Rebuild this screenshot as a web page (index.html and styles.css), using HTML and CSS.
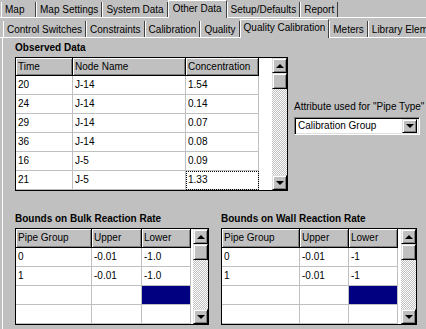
FILE: index.html
```html
<!DOCTYPE html>
<html lang="en">
<head>
  <meta charset="UTF-8" />
  <title>Quality Calibration</title>
  <link rel="stylesheet" href="styles.css">
</head>
<body>
  <div class="tabs tabs-main">
    <div class="tab tab-map">Map</div>
    <div class="tab">Map Settings</div>
    <div class="tab">System Data</div>
    <div class="tab active">Other Data</div>
    <div class="tab">Setup/Defaults</div>
    <div class="tab">Report</div>
  </div>

  <div class="tabs tabs-sub">
    <div class="tab">Control Switches</div>
    <div class="tab">Constraints</div>
    <div class="tab">Calibration</div>
    <div class="tab">Quality</div>
    <div class="tab active">Quality Calibration</div>
    <div class="tab">Meters</div>
    <div class="tab">Library Elements</div>
  </div>

  <div class="page">
    <div class="observed">
      <div class="panel">
        <div class="panel-title">Observed Data</div>
        <div class="grid grid-observed">
          <div class="grid-body">
            <div class="grid-table">
              <div class="hcell">Time</div>
              <div class="hcell">Node Name</div>
              <div class="hcell">Concentration</div>

              <div class="cell">20</div><div class="cell">J-14</div><div class="cell">1.54</div>
              <div class="cell">24</div><div class="cell">J-14</div><div class="cell">0.14</div>
              <div class="cell">29</div><div class="cell">J-14</div><div class="cell">0.07</div>
              <div class="cell">36</div><div class="cell">J-14</div><div class="cell">0.08</div>
              <div class="cell">16</div><div class="cell">J-5</div><div class="cell">0.09</div>
              <div class="cell">21</div><div class="cell">J-5</div><div class="cell cell-focus">1.33</div>
            </div>
          </div>
          <div class="scrollbar">
            <div class="sb-btn"><i class="arrow-up"></i></div>
            <div class="sb-thumb"></div>
            <div class="sb-track"></div>
            <div class="sb-btn"><i class="arrow-down"></i></div>
          </div>
        </div>
      </div>

      <div class="attribute">
        <div class="attribute-label">Attribute used for "Pipe Type"</div>
        <div class="combo">
          <span class="combo-text">Calibration Group</span>
          <span class="combo-btn"><i class="arrow-down"></i></span>
        </div>
      </div>
    </div>

    <div class="bounds">
      <div class="panel">
        <div class="panel-title">Bounds on Bulk Reaction Rate</div>
        <div class="grid grid-bounds grid-bulk">
          <div class="grid-body">
            <div class="grid-table">
              <div class="hcell">Pipe Group</div>
              <div class="hcell">Upper</div>
              <div class="hcell">Lower</div>

              <div class="cell">0</div><div class="cell">-0.01</div><div class="cell">-1.0</div>
              <div class="cell">1</div><div class="cell">-0.01</div><div class="cell">-1.0</div>
              <div class="cell"></div><div class="cell"></div><div class="cell cell-selected"></div>
              <div class="cell"></div><div class="cell"></div><div class="cell"></div>
            </div>
          </div>
          <div class="scrollbar">
            <div class="sb-btn"><i class="arrow-up"></i></div>
            <div class="sb-thumb"></div>
            <div class="sb-track"></div>
            <div class="sb-btn"><i class="arrow-down"></i></div>
          </div>
        </div>
      </div>

      <div class="panel">
        <div class="panel-title">Bounds on Wall Reaction Rate</div>
        <div class="grid grid-bounds grid-wall">
          <div class="grid-body">
            <div class="grid-table">
              <div class="hcell">Pipe Group</div>
              <div class="hcell">Upper</div>
              <div class="hcell">Lower</div>

              <div class="cell">0</div><div class="cell">-0.01</div><div class="cell">-1</div>
              <div class="cell">1</div><div class="cell">-0.01</div><div class="cell">-1</div>
              <div class="cell"></div><div class="cell"></div><div class="cell cell-selected"></div>
              <div class="cell"></div><div class="cell"></div><div class="cell"></div>
            </div>
          </div>
          <div class="scrollbar">
            <div class="sb-btn"><i class="arrow-up"></i></div>
            <div class="sb-thumb"></div>
            <div class="sb-track"></div>
            <div class="sb-btn"><i class="arrow-down"></i></div>
          </div>
        </div>
      </div>
    </div>
  </div>
</body>
</html>
```

FILE: styles.css
```css
* {
  box-sizing: border-box;
}

body {
  margin: 0;
  width: 426px;
  height: 329px;
  overflow: hidden;
  background: #c0c0c0;
  color: #000;
  font-family: "Liberation Sans", Arial, sans-serif;
  font-size: 10px;
}

/* tab strips */
.tabs {
  display: flex;
  align-items: flex-start;
  white-space: nowrap;
  border-bottom: 1px solid #fff;
}

.tab {
  flex-shrink: 0;
  padding: 0 3px;
  border-left: 1px solid #fff;
  border-right: 1px solid #404040;
}

.tabs-main {
  height: 18px;
  padding-left: 1px;
}

.tabs-main .tab {
  margin-top: 2px;
  height: 15px;
  padding-top: 1px;
  line-height: 14px;
}

.tabs-main .tab-map {
  min-width: 35px;
}

.tabs-main .tab.active {
  margin-top: 0;
  height: 18px;
  padding: 1px 4px 0;
  border-top: 1px solid #fff;
  line-height: 14px;
  background: #c0c0c0;
}

.tabs-sub {
  height: 20px;
  padding-left: 3px;
}

.tabs-sub .tab {
  margin-top: 3px;
  height: 16px;
  padding-top: 2px;
  line-height: 14px;
}

.tabs-sub .tab.active {
  margin-top: 1px;
  height: 19px;
  padding-top: 1px;
  border-top: 1px solid #fff;
  background: #c0c0c0;
}

/* page */
.page {
  margin-left: 2px;
  border-left: 1px solid #fff;
  padding: 4px 0 0 12px;
  height: 291px;
}

.panel-title {
  font-weight: bold;
  line-height: 12px;
  margin-bottom: 3px;
  white-space: nowrap;
}

.observed {
  display: flex;
  gap: 6px;
}

.attribute {
  align-self: center;
  margin-top: 2px;
}

.attribute-label {
  line-height: 12px;
  margin-bottom: 4px;
  white-space: nowrap;
}

.combo {
  display: flex;
  align-items: center;
  width: 126px;
  height: 18px;
  padding: 2px;
  background: #fff;
  border: 1px solid;
  border-color: #808080 #fff #fff #808080;
  box-shadow: inset 1px 1px #000, inset -1px -1px #dfdfdf;
}

.combo-text {
  flex: 1;
  padding-left: 1px;
  line-height: 14px;
}

.combo-btn {
  width: 15px;
  height: 14px;
  display: flex;
  align-items: center;
  justify-content: center;
  background: #c0c0c0;
  border: 1px solid;
  border-color: #dfdfdf #000 #000 #dfdfdf;
  box-shadow: inset 1px 1px #fff, inset -1px -1px #808080;
}

.bounds {
  display: flex;
  gap: 12px;
  margin-top: 22px;
}

/* string grids */
.grid {
  display: flex;
  border: 1px solid #000;
}

.grid-observed { width: 273px; }
.grid-bulk { width: 194px; }
.grid-wall { width: 196px; }

.grid-body {
  flex: 1;
  background: #fff;
}

.grid-table {
  display: grid;
  grid-template-rows: 18px;
  grid-auto-rows: 19px;
}

.grid-observed .grid-table { grid-template-columns: 57px 113px 73px; }
.grid-bounds .grid-table { grid-template-rows: 19px; }
.grid-bulk .grid-table { grid-template-columns: 76px 50px 49px; }
.grid-wall .grid-table { grid-template-columns: 78px 49px 49px; }

.hcell,
.cell {
  padding: 0 2px;
  white-space: nowrap;
  overflow: hidden;
}

.hcell {
  background: #c0c0c0;
  border-right: 1px solid #000;
  border-bottom: 1px solid #000;
  box-shadow: inset 1px 1px #fff, inset -1px -1px #808080;
  line-height: 17px;
}

.grid-bounds .hcell {
  line-height: 18px;
}

.cell {
  border-right: 1px solid #c0c0c0;
  border-bottom: 1px solid #c0c0c0;
  line-height: 18px;
}

.cell-focus {
  outline: 1px dotted #000;
  outline-offset: -1px;
}

.cell-selected {
  background: #000080;
}

/* scrollbar */
.scrollbar {
  width: 15px;
  flex-shrink: 0;
  display: flex;
  flex-direction: column;
}

.sb-btn,
.sb-thumb {
  height: 15px;
  display: flex;
  align-items: center;
  justify-content: center;
  background: #c0c0c0;
  border: 1px solid;
  border-color: #dfdfdf #000 #000 #dfdfdf;
  box-shadow: inset 1px 1px #fff, inset -1px -1px #808080;
}

.sb-thumb {
  height: 16px;
}

.sb-track {
  flex: 1;
  background: repeating-conic-gradient(#fff 0 25%, #c0c0c0 0 50%) 0 0 / 2px 2px;
}

.arrow-up,
.arrow-down {
  width: 0;
  height: 0;
  border-left: 4px solid transparent;
  border-right: 4px solid transparent;
}

.arrow-up {
  border-bottom: 4px solid #000;
}

.arrow-down {
  border-top: 4px solid #000;
}
```
